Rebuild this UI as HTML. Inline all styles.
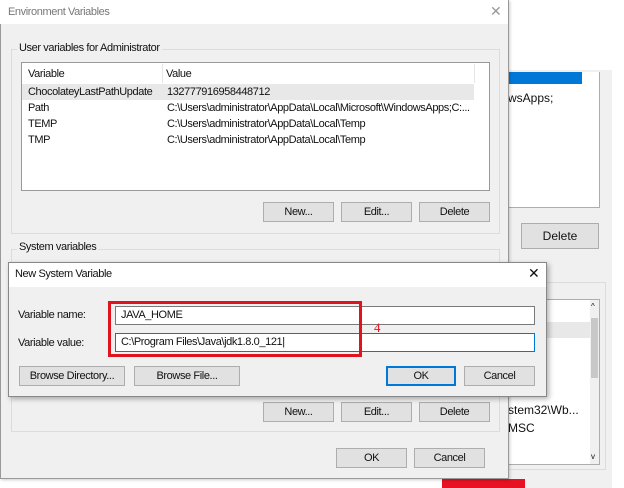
<!DOCTYPE html>
<html><head><meta charset="utf-8"><style>
*{margin:0;padding:0;box-sizing:border-box}
body{width:624px;height:488px;background:#fff;position:relative;overflow:hidden;font-family:"Liberation Sans",sans-serif;font-size:11px;color:#111;letter-spacing:-0.4px}
.a{position:absolute}
.btn{position:absolute;background:#e1e1e1;border:1px solid #adadad;text-align:center;font-size:11px;display:flex;align-items:center;justify-content:center}
.t{position:absolute;white-space:nowrap}
</style></head><body>
<!-- background window -->
<div class="a" style="left:508px;top:70px;width:104px;height:418px;background:#f0f0f0"></div>
<div class="a" style="left:508px;top:72px;width:92px;height:136px;background:#fff;border:1px solid #adadad;border-top:none;border-left:none"></div>
<div class="a" style="left:508px;top:72px;width:74px;height:12px;background:#0078d7"></div>
<div class="t" style="left:508px;top:91px;font-size:12px;letter-spacing:0">wsApps;</div>
<div class="btn" style="left:521px;top:223px;width:78px;height:26px;font-size:12px;letter-spacing:0">Delete</div>
<div class="a" style="left:508px;top:282px;width:98px;height:188px;border:1px solid #dcdcdc;border-left:none"></div>
<div class="a" style="left:508px;top:299px;width:92px;height:166px;background:#fff;border:1px solid #adadad;border-left:none"></div>
<div class="a" style="left:508px;top:322px;width:82px;height:16px;background:#e8e8e8"></div>
<div class="a" style="left:590px;top:300px;width:9px;height:164px;background:#f0f0f0"></div>
<div class="a" style="left:591px;top:318px;width:7px;height:60px;background:#c8c8c8"></div>
<div class="t" style="left:591px;top:302px;font-size:8px">^</div>
<div class="t" style="left:591px;top:452px;font-size:8px">v</div>
<div class="t" style="left:508px;top:403px;font-size:12px;letter-spacing:0">stem32\Wb...</div>
<div class="t" style="left:508px;top:421px;font-size:12px;letter-spacing:0">MSC</div>
<div class="a" style="left:442px;top:479px;width:83px;height:9px;background:#e81123"></div>

<!-- main dialog -->
<div class="a" style="left:0;top:0;width:509px;height:479px;background:#f0f0f0;border:1px solid #999;border-top:none;box-shadow:1px 1px 3px rgba(0,0,0,.2)"></div>
<div class="a" style="left:0;top:0;width:508px;height:24px;background:#fff"></div>
<div class="t" style="left:8px;top:6px;color:#777">Environment Variables</div>
<div class="t" style="left:490px;top:3px;color:#999;font-size:14px">✕</div>
<div class="a" style="left:11px;top:49px;width:489px;height:185px;border:1px solid #dcdcdc"></div>
<div class="t" style="left:17px;top:42px;background:#f0f0f0;padding:0 2px">User variables for Administrator</div>
<div class="a" style="left:21px;top:62px;width:469px;height:129px;background:#fff;border:1px solid #999"></div>
<div class="a" style="left:162px;top:64px;width:1px;height:19px;background:#e5e5e5"></div>
<div class="a" style="left:474px;top:64px;width:1px;height:19px;background:#e5e5e5"></div>
<div class="a" style="left:22px;top:84px;width:452px;height:16px;background:#e8e8e8"></div>
<div class="t" style="left:28px;top:68px">Variable</div><div class="t" style="left:166px;top:68px">Value</div>
<div class="t" style="left:28px;top:86px">ChocolateyLastPathUpdate</div><div class="t" style="left:167px;top:86px">132777916958448712</div>
<div class="t" style="left:28px;top:102px">Path</div><div class="t" style="left:167px;top:102px">C:\Users\administrator\AppData\Local\Microsoft\WindowsApps;C:...</div>
<div class="t" style="left:28px;top:118px">TEMP</div><div class="t" style="left:167px;top:118px">C:\Users\administrator\AppData\Local\Temp</div>
<div class="t" style="left:28px;top:134px">TMP</div><div class="t" style="left:167px;top:134px">C:\Users\administrator\AppData\Local\Temp</div>
<div class="btn" style="left:263px;top:202px;width:71px;height:20px">New...</div>
<div class="btn" style="left:341px;top:202px;width:71px;height:20px">Edit...</div>
<div class="btn" style="left:419px;top:202px;width:71px;height:20px">Delete</div>
<div class="a" style="left:11px;top:249px;width:489px;height:183px;border:1px solid #dcdcdc"></div>
<div class="t" style="left:17px;top:241px;background:#f0f0f0;padding:0 2px">System variables</div>
<div class="btn" style="left:263px;top:402px;width:71px;height:20px">New...</div>
<div class="btn" style="left:341px;top:402px;width:71px;height:20px">Edit...</div>
<div class="btn" style="left:419px;top:402px;width:71px;height:20px">Delete</div>
<div class="btn" style="left:336px;top:448px;width:71px;height:20px">OK</div>
<div class="btn" style="left:414px;top:448px;width:71px;height:20px">Cancel</div>

<!-- new system variable -->
<div class="a" style="left:8px;top:262px;width:539px;height:135px;background:#f0f0f0;border:1px solid #888;box-shadow:2px 2px 5px rgba(0,0,0,.3)"></div>
<div class="a" style="left:9px;top:263px;width:537px;height:24px;background:#fff"></div>
<div class="t" style="left:15px;top:268px">New System Variable</div>
<div class="t" style="left:528px;top:265px;font-size:14px">✕</div>
<div class="t" style="left:18px;top:309px">Variable name:</div>
<div class="t" style="left:18px;top:337px">Variable value:</div>
<div class="a" style="left:115px;top:306px;width:420px;height:19px;background:#fff;border:1px solid #7a7a7a"></div>
<div class="a" style="left:115px;top:333px;width:420px;height:19px;background:#fff;border:1px solid #0078d7"></div>
<div class="t" style="left:121px;top:309px">JAVA_HOME</div>
<div class="t" style="left:121px;top:336px">C:\Program Files\Java\jdk1.8.0_121|</div>
<div class="a" style="left:108px;top:301px;width:254px;height:56px;border:3px solid #e0141e"></div>
<div class="t" style="left:374px;top:320px;color:#e0141e;font-family:'Liberation Serif',serif;font-size:13px">4</div>
<div class="btn" style="left:19px;top:366px;width:106px;height:20px">Browse Directory...</div>
<div class="btn" style="left:134px;top:366px;width:106px;height:20px">Browse File...</div>
<div class="btn" style="left:386px;top:366px;width:70px;height:20px;border:1px solid #0078d7;box-shadow:inset 0 0 0 1px #0078d7">OK</div>
<div class="btn" style="left:464px;top:366px;width:71px;height:20px">Cancel</div>
</body></html>
